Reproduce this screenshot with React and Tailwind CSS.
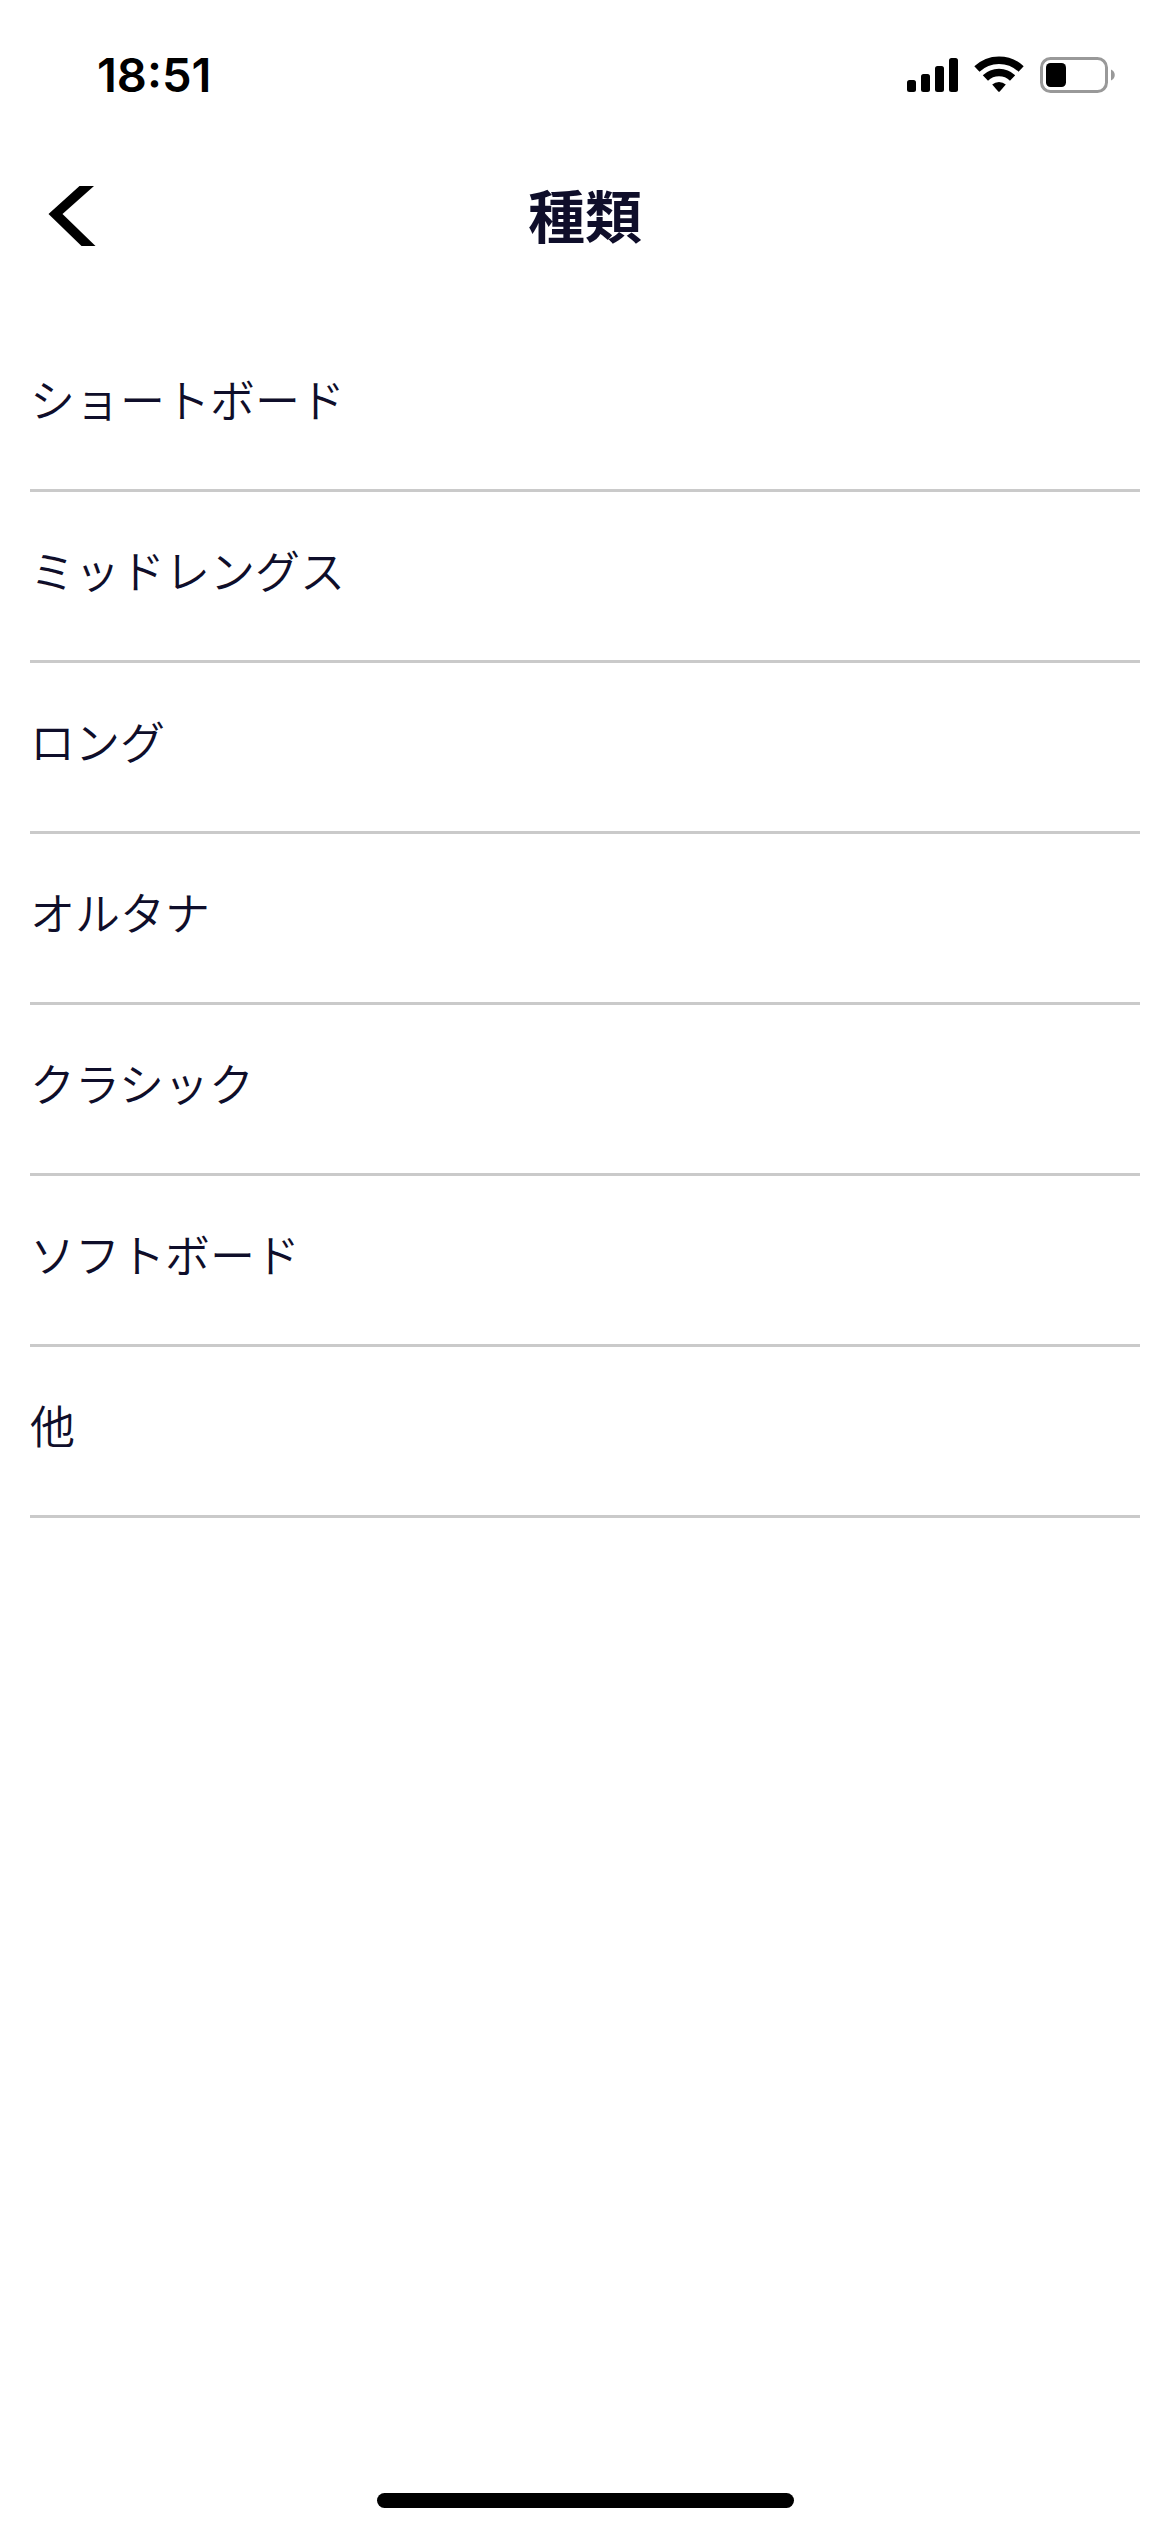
import React from "react";

const boardTypes = [
  "ショートボード",
  "ミッドレングス",
  "ロング",
  "オルタナ",
  "クラシック",
  "ソフトボード",
  "他",
];

const StatusBar = () => {
  return (
    <div className="h-[141px] pt-[45px] pl-[97px] pr-[54px] flex items-start justify-between text-black">
      <span className="font-[Inter,sans-serif] text-[47px] leading-[60px] font-semibold">
        18:51
      </span>
      <div className="h-[60px] flex items-center gap-4">
        {/* Signal */}
        <svg width="51" height="38" viewBox="0 0 51 38" fill="currentColor">
          <rect x="0" y="24" width="9" height="12" rx="2.5" />
          <rect x="14" y="18" width="9" height="18" rx="2.5" />
          <rect x="28" y="10" width="9" height="26" rx="2.5" />
          <rect x="42" y="2" width="9" height="34" rx="2.5" />
        </svg>
        {/* Wifi */}
        <svg width="50" height="38" viewBox="0 0 50 38">
          <g fill="none" stroke="currentColor" strokeWidth="7.5">
            <path d="M2.9 13 A32 32 0 0 1 47.1 13" />
            <path d="M11.4 22 A19.5 19.5 0 0 1 38.6 22" />
          </g>
          <path
            d="M18.2 28.6 A10 10 0 0 1 31.8 28.6 L26 35.2 Q25 36.2 24 35.2 Z"
            fill="currentColor"
          />
        </svg>
        {/* Battery */}
        <svg width="76" height="38" viewBox="0 0 76 38">
          <rect
            x="1.5"
            y="2.5"
            width="65"
            height="33"
            rx="9"
            fill="none"
            stroke="#999999"
            strokeWidth="3"
          />
          <rect x="6" y="7" width="20" height="24" rx="4.5" fill="currentColor" />
          <path d="M71 13.5 C76 15.5 76 22.5 71 24.5 Z" fill="#999999" />
        </svg>
      </div>
    </div>
  );
};

const App = () => {
  return (
    <div className="min-h-screen bg-white flex flex-col font-['Noto_Sans_CJK_JP',sans-serif] text-[#0f0e2a]">
      <StatusBar />

      <header className="h-[150px] px-[30px] grid grid-cols-[1fr_auto_1fr] items-center">
        <button
          type="button"
          aria-label="戻る"
          className="w-[84px] h-20 flex items-center justify-center text-black"
        >
          <svg width="48" height="60" viewBox="0 0 48 60" fill="currentColor">
            <path d="M31.5 0 H46 L14.5 28 L47.5 60 H33.5 L0.5 28 Z" />
          </svg>
        </button>
        <h1 className="pb-1.5 text-[57px] leading-[84px] font-bold">種類</h1>
      </header>

      <ul className="mt-[30px] px-[30px] grow">
        {boardTypes.map((type) => (
          <li key={type} className="border-b-[3px] border-[#cacaca]">
            <button
              type="button"
              className="w-full h-[168px] pb-3 text-left text-[45px] leading-[68px] font-[350]"
            >
              {type}
            </button>
          </li>
        ))}
      </ul>

      <div className="w-[417px] h-[15px] mb-6 mx-auto rounded-full bg-black" />
    </div>
  );
};

export default App;
